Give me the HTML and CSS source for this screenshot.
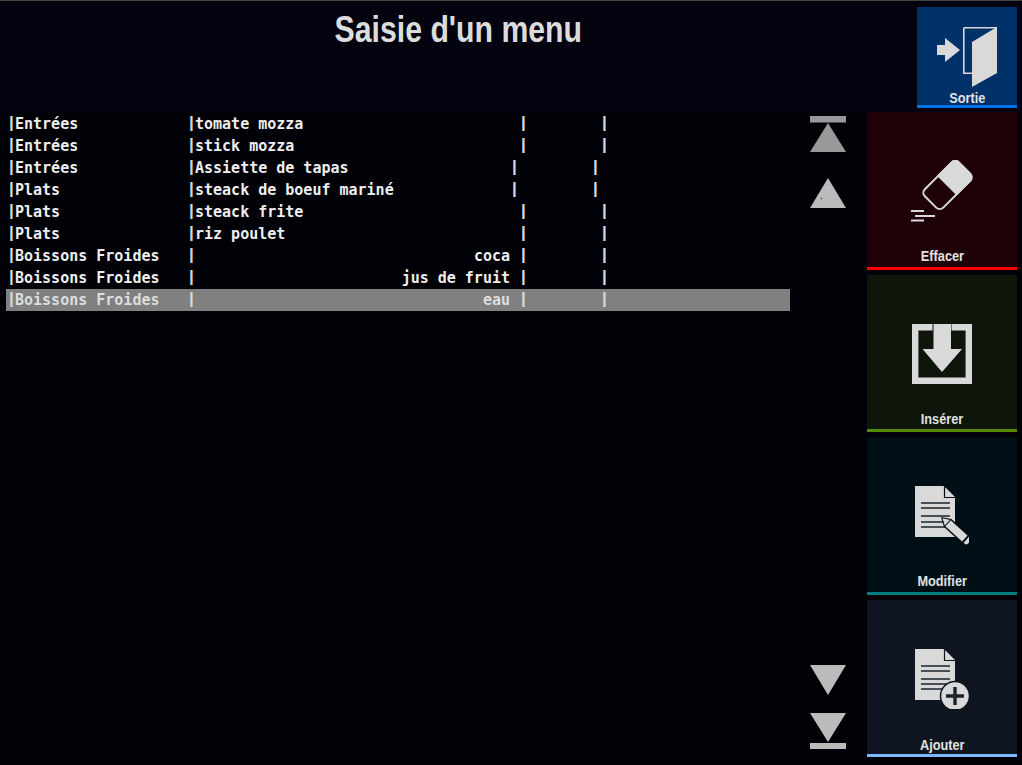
FILE: index.html
```html
<!DOCTYPE html>
<html lang="fr">
<head>
<meta charset="utf-8">
<title>Saisie d'un menu</title>
<link rel="stylesheet" href="styles.css">
</head>
<body>
<div class="page">
  <header class="top">
    <h1 class="title"><span class="title-text">Saisie d'un menu</span></h1>
    <button class="action action--exit">
      <svg viewBox="0 0 60 60" width="60" height="60">
        <path d="M0 18h8v-7l15 12-15 12v-7H0z" fill="#d9d9d9"/>
        <path d="M26.800 .8h33v45.400M26.800 .8v45.400h10" fill="none" stroke="#d9d9d9" stroke-width="1.600"/>
        <path d="M35 15 60 0v46L35 60z" fill="#d9d9d9"/>
      </svg>
      <span class="label">Sortie</span>
    </button>
  </header>
  <main class="content">
    <section class="list">
      <div class="row"><span class="c c1"><i>|</i>Entrées</span><span class="c c2"><i>|</i>tomate mozza</span><span class="c c3"><i>|</i></span><span class="c"><i>|</i></span></div>
      <div class="row"><span class="c c1"><i>|</i>Entrées</span><span class="c c2"><i>|</i>stick mozza</span><span class="c c3"><i>|</i></span><span class="c"><i>|</i></span></div>
      <div class="row row--short"><span class="c c1"><i>|</i>Entrées</span><span class="c c2"><i>|</i>Assiette de tapas</span><span class="c c3"><i>|</i></span><span class="c"><i>|</i></span></div>
      <div class="row row--short"><span class="c c1"><i>|</i>Plats</span><span class="c c2"><i>|</i>steack de boeuf mariné</span><span class="c c3"><i>|</i></span><span class="c"><i>|</i></span></div>
      <div class="row"><span class="c c1"><i>|</i>Plats</span><span class="c c2"><i>|</i>steack frite</span><span class="c c3"><i>|</i></span><span class="c"><i>|</i></span></div>
      <div class="row"><span class="c c1"><i>|</i>Plats</span><span class="c c2"><i>|</i>riz poulet</span><span class="c c3"><i>|</i></span><span class="c"><i>|</i></span></div>
      <div class="row"><span class="c c1"><i>|</i>Boissons Froides</span><span class="c c2 c2--right"><i>|</i><b>coca</b></span><span class="c c3"><i>|</i></span><span class="c"><i>|</i></span></div>
      <div class="row"><span class="c c1"><i>|</i>Boissons Froides</span><span class="c c2 c2--right"><i>|</i><b>jus de fruit</b></span><span class="c c3"><i>|</i></span><span class="c"><i>|</i></span></div>
      <div class="row row--selected"><span class="c c1"><i>|</i>Boissons Froides</span><span class="c c2 c2--right"><i>|</i><b>eau</b></span><span class="c c3"><i>|</i></span><span class="c"><i>|</i></span></div>
    </section>
    <nav class="arrows">
      <div class="arrow-group">
        <svg class="arrow arrow--first" viewBox="0 0 36 36" width="36" height="36"><path d="M0 0h36v6.500H0zM18 7 36 36H0z"/></svg>
        <svg class="arrow" viewBox="0 0 36 30" width="36" height="30"><path d="M18 0 36 30H0z"/><circle cx="11.400" cy="20.500" r=".7" fill="#333"/></svg>
      </div>
      <div class="arrow-group arrow-group--end">
        <svg class="arrow" viewBox="0 0 36 30" width="36" height="30"><path d="M0 0h36L18 30z"/></svg>
        <svg class="arrow" viewBox="0 0 36 36" width="36" height="36"><path d="M0 0h36L18 29zM0 30h36v6H0z"/></svg>
      </div>
    </nav>
    <aside class="actions">
      <button class="action action--clear">
        <svg viewBox="0 0 62 62" width="62" height="62">
          <g transform="translate(36.500 25) rotate(-45)">
            <rect x="-24" y="-13" width="48" height="26" rx="5" fill="none" stroke="#d9d9d9" stroke-width="2"/>
            <path d="M-1 -14h20a6 6 0 0 1 6 6v16a6 6 0 0 1-6 6h-20z" fill="#d9d9d9"/>
          </g>
          <path d="M0 51h13M4 56h20M0 60.500h13" stroke="#d9d9d9" stroke-width="1.800"/>
        </svg>
        <span class="label">Effacer</span>
      </button>
      <button class="action action--insert">
        <svg viewBox="0 0 60 60" width="60" height="60">
          <path d="M20.500 3.200H3.200v53.600h53.600V3.200H39.500" fill="none" stroke="#d9d9d9" stroke-width="6.400"/>
          <path d="M21.500 0h17.500v25h11L30 48 10.500 25h11z" fill="#d9d9d9"/>
        </svg>
        <span class="label">Insérer</span>
      </button>
      <button class="action action--edit">
        <svg viewBox="0 0 54 60" width="54" height="60">
          <path d="M0 0h29l11 11v40H0z" fill="#d9d9d9"/>
          <path d="M29.500 0v11.500h11" fill="none" stroke="#000e15" stroke-width="1.200"/>
          <path d="M6 17h29M6 22h29M6 30h29M6 36h26M6 41h24" stroke="#1a232a" stroke-width="1.400"/>
          <g transform="translate(26 31) rotate(42)">
            <path d="M0 0 9-5.500H33V5.500H9z" fill="#000e15"/>
            <path d="M2 0 9-4H32V4H9z" fill="#d9d9d9"/>
            <path d="M9-4V4" stroke="#000e15" stroke-width="1"/>
            <path d="M34-4h2q2 0 2 4t-2 4h-2z" fill="#d9d9d9"/>
          </g>
        </svg>
        <span class="label">Modifier</span>
      </button>
      <button class="action action--add">
        <svg viewBox="0 0 54 60" width="54" height="60">
          <path d="M0 0h29l11 11v40H0z" fill="#d9d9d9"/>
          <path d="M29.500 0v11.500h11" fill="none" stroke="#0f1520" stroke-width="1.200"/>
          <path d="M6 17h29M6 22h29M6 30h29M6 35h26M6 40h24" stroke="#1a232a" stroke-width="1.400"/>
          <circle cx="40" cy="47" r="14.500" fill="#d9d9d9" stroke="#0f1520" stroke-width="1.500"/>
          <path d="M40 38v18M31 47h18" stroke="#1a232a" stroke-width="3.400"/>
        </svg>
        <span class="label">Ajouter</span>
      </button>
    </aside>
  </main>
</div>
</body>
</html>
```

FILE: styles.css
```css
* { box-sizing: border-box; }
html, body { margin: 0; height: 100%; }
body {
  background: #010208;
  color: #eee;
  overflow: hidden;
}
.page {
  width: 1022px;
  height: 765px;
  display: flex;
  flex-direction: column;
  border-top: 1px solid #444;
}
.top {
  height: 111px;
  flex: none;
  display: flex;
  background: #03040f;
  padding: 6px 5px 4px 0;
}
.title {
  flex: 1;
  margin: 0;
  padding-top: 1px;
  text-align: center;
  font: bold 36px/44px "Liberation Sans", Arial, sans-serif;
  color: #dcdcdc;
}
.title-text { display: inline-block; transform: scaleX(.84); }
.content {
  flex: 1;
  display: flex;
  padding: 0 5px 8px 6px;
  min-height: 0;
}
.list {
  width: 784px;
  flex: none;
  padding-top: 1px;
  font: bold 15px/22px "DejaVu Sans Mono", monospace;
  color: #eee;
}
.row {
  display: flex;
  height: 22px;
  white-space: pre;
  --c2: 334px;
}
.row--short { --c2: 325px; }
.row--selected { background: #808080; color: #ddd; }
.c { display: flex; }
.c i {
  font: bold 17px/19px "Liberation Sans", sans-serif;
  width: 6px;
  flex: none;
  text-align: left;
  color: #d8d8d8;
}
.c1 { width: 181px; padding-left: 3px; }
.c2 { width: var(--c2); }
.c2 i { margin-left: 2px; }
.c2--right b { flex: 1; text-align: right; padding-right: 11px; }
.c3 { width: 81px; }
.arrows {
  width: 77px;
  flex: none;
  display: flex;
  flex-direction: column;
  justify-content: space-between;
  align-items: center;
  padding: 4px 0 8px 0;
}
.arrow-group { display: flex; flex-direction: column; gap: 26px; margin-right: 1px; }
.arrow-group--end { gap: 18px; }
.arrow { display: block; fill: #bbb; }
.arrow--first { fill: #999; }
.actions {
  width: 150px;
  flex: none;
  display: grid;
  grid-template-rows: repeat(4, 1fr);
  gap: 5px;
}
.action {
  display: flex;
  flex-direction: column;
  align-items: center;
  border: 0;
  border-bottom: 3px solid;
  padding: 49px 0 0;
  font: inherit;
}
.action svg { display: block; flex: none; }
.label {
  margin-top: auto;
  margin-bottom: 2px;
  font: bold 15px/18px "Liberation Sans", sans-serif;
  color: #e2e2e2;
  transform: scaleX(.85);
}
.action--exit { width: 100px; padding-top: 20px; background: #003168; border-color: #0073ea; }
.action--exit .label { margin-bottom: -2px; }
.action--clear { padding-top: 48px; background: #1f0208; border-color: #f00; }
.action--insert { background: #0e150b; border-color: #558b00; }
.action--insert .label { margin-bottom: 1px; }
.action--edit { background: #000e15; border-color: #008080; }
.action--add { background: #0f1520; border-color: #7db8ff; }
.action--add .label { margin-bottom: 0; }
```
